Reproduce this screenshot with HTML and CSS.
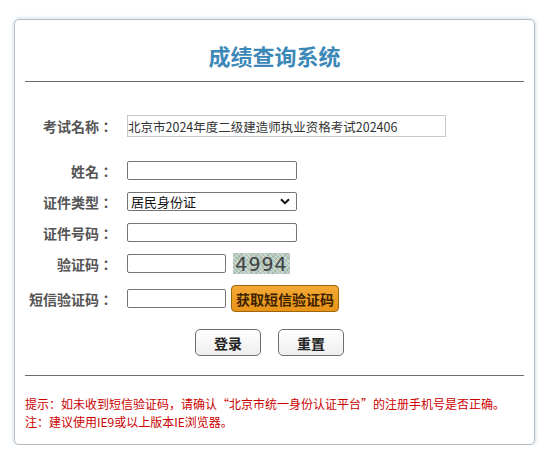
FILE: index.html
```html
<!DOCTYPE html>
<html lang="zh-CN">
<head>
<meta charset="utf-8">
<title>成绩查询系统</title>
<link rel="stylesheet" href="styles.css">
</head>
<body>
<div class="card">
  <h1 class="title">成绩查询系统</h1>
  <div class="rule"></div>
  <form class="form">
    <div class="row row-exam">
      <label class="label" lang="ja">考试名称：</label>
      <input class="field field-exam" type="text" value="北京市2024年度二级建造师执业资格考试202406" readonly>
    </div>
    <div class="row">
      <label class="label" lang="ja">姓名：</label>
      <input class="field field-md" type="text">
    </div>
    <div class="row">
      <label class="label" lang="ja">证件类型：</label>
      <div class="select">
        <span class="select-text">居民身份证</span>
        <svg class="chev" width="10" height="7" viewBox="0 0 10 7"><path d="M1 1.2 L5 5.2 L9 1.2" fill="none" stroke="#111" stroke-width="2"/></svg>
      </div>
    </div>
    <div class="row">
      <label class="label" lang="ja">证件号码：</label>
      <input class="field field-md" type="text">
    </div>
    <div class="row">
      <label class="label" lang="ja">验证码：</label>
      <input class="field field-sm" type="text">
      <div class="captcha">4994</div>
    </div>
    <div class="row row-sms">
      <label class="label" lang="ja">短信验证码：</label>
      <input class="field field-sm" type="text">
      <button type="button" class="sms-btn">获取短信验证码</button>
    </div>
    <div class="actions">
      <button type="button" class="btn">登录</button>
      <button type="button" class="btn">重置</button>
    </div>
  </form>
  <div class="rule rule-bottom"></div>
  <div class="notes">
    <p class="note">提示：如未收到短信验证码，请确认“北京市统一身份认证平台”的注册手机号是否正确。</p>
    <p class="note">注：建议使用IE9或以上版本IE浏览器。</p>
  </div>
</div>
</body>
</html>
```
FILE: styles.css
```css
html, body {
  margin: 0;
  padding: 0;
  background: #ffffff;
}
body {
  padding: 19px 8px 0 14px;
  font-family: "Noto Sans CJK SC", "Noto Sans", sans-serif;
}
.card {
  width: 521px;
  box-sizing: border-box;
  border: 1px solid #b4bcc4;
  border-radius: 5px;
  box-shadow: 0 0 4px rgba(120, 160, 200, 0.45);
  background: #fff;
  padding: 0 10px 13px 10px;
}
.title {
  margin: 20px 0 11px 0;
  font-size: 22px;
  line-height: 30px;
  font-weight: 700;
  text-align: center;
  color: #3c88b8;
}
.rule {
  height: 1px;
  background: #6a6e72;
}
.form {
  margin: 33px 0 0 0;
}
.row {
  display: flex;
  align-items: center;
  height: 31px;
}
.row-exam {
  height: 22px;
  margin-bottom: 18px;
}
.row-sms {
  height: 39px;
}
.label {
  width: 88px;
  flex: none;
  text-align: right;
  font-family: "Noto Sans CJK JP", "Noto Sans CJK SC", sans-serif;
  font-size: 14px;
  font-weight: 700;
  color: #555;
  margin-right: 14px;
  white-space: nowrap;
}
.field {
  box-sizing: border-box;
  height: 19px;
  border: 1px solid #767676;
  border-radius: 2px;
  padding: 0 2px;
  font-family: inherit;
  font-size: 13px;
  background: #fff;
  outline: none;
}
.field-exam {
  width: 319px;
  height: 22px;
  border: 1px solid #c8c8c8;
  border-radius: 0;
  padding: 0;
  color: #333;
  font-size: 12.5px;
}
.field-md {
  width: 170px;
}
.field-sm {
  width: 99px;
}
.select {
  box-sizing: border-box;
  width: 170px;
  height: 19px;
  border: 1px solid #767676;
  border-radius: 2px;
  display: flex;
  align-items: center;
  justify-content: space-between;
  padding: 0 6px 0 3px;
  font-size: 13px;
  color: #111;
}
.select-text {
  line-height: 17px;
}
.captcha {
  margin-left: 7px;
  width: 57px;
  height: 21px;
  box-sizing: border-box;
  display: flex;
  align-items: center;
  justify-content: center;
  font-family: "DejaVu Sans", sans-serif;
  font-size: 19px;
  letter-spacing: 1px;
  color: #3f4344;
  background-color: #b7c9bd;
  background-image:
    repeating-linear-gradient(45deg, rgba(255,255,255,0.35) 0 1px, transparent 1px 3px),
    repeating-linear-gradient(-45deg, rgba(90,120,110,0.25) 0 1px, transparent 1px 4px);
}
.sms-btn {
  margin-left: 5px;
  width: 108px;
  height: 27px;
  box-sizing: border-box;
  border: 1px solid #a0650a;
  border-radius: 4px;
  background: linear-gradient(#f3a935, #e89417);
  color: #3d2200;
  font-family: inherit;
  font-size: 14px;
  font-weight: 700;
  padding: 0;
}
.actions {
  display: flex;
  justify-content: flex-start;
  gap: 17px;
  margin: 11px 0 0 170px;
}
.btn {
  width: 66px;
  height: 27px;
  box-sizing: border-box;
  border: 1px solid #6f6f6f;
  border-radius: 5px;
  background: linear-gradient(#ffffff, #eeeeee);
  color: #222;
  font-family: inherit;
  font-size: 14px;
  font-weight: 700;
  padding: 0;
}
.rule-bottom {
  margin-top: 19px;
}
.notes {
  padding-top: 19px;
}
.note {
  margin: 0;
  font-size: 12px;
  line-height: 18px;
  color: #cc0000;
}
```
